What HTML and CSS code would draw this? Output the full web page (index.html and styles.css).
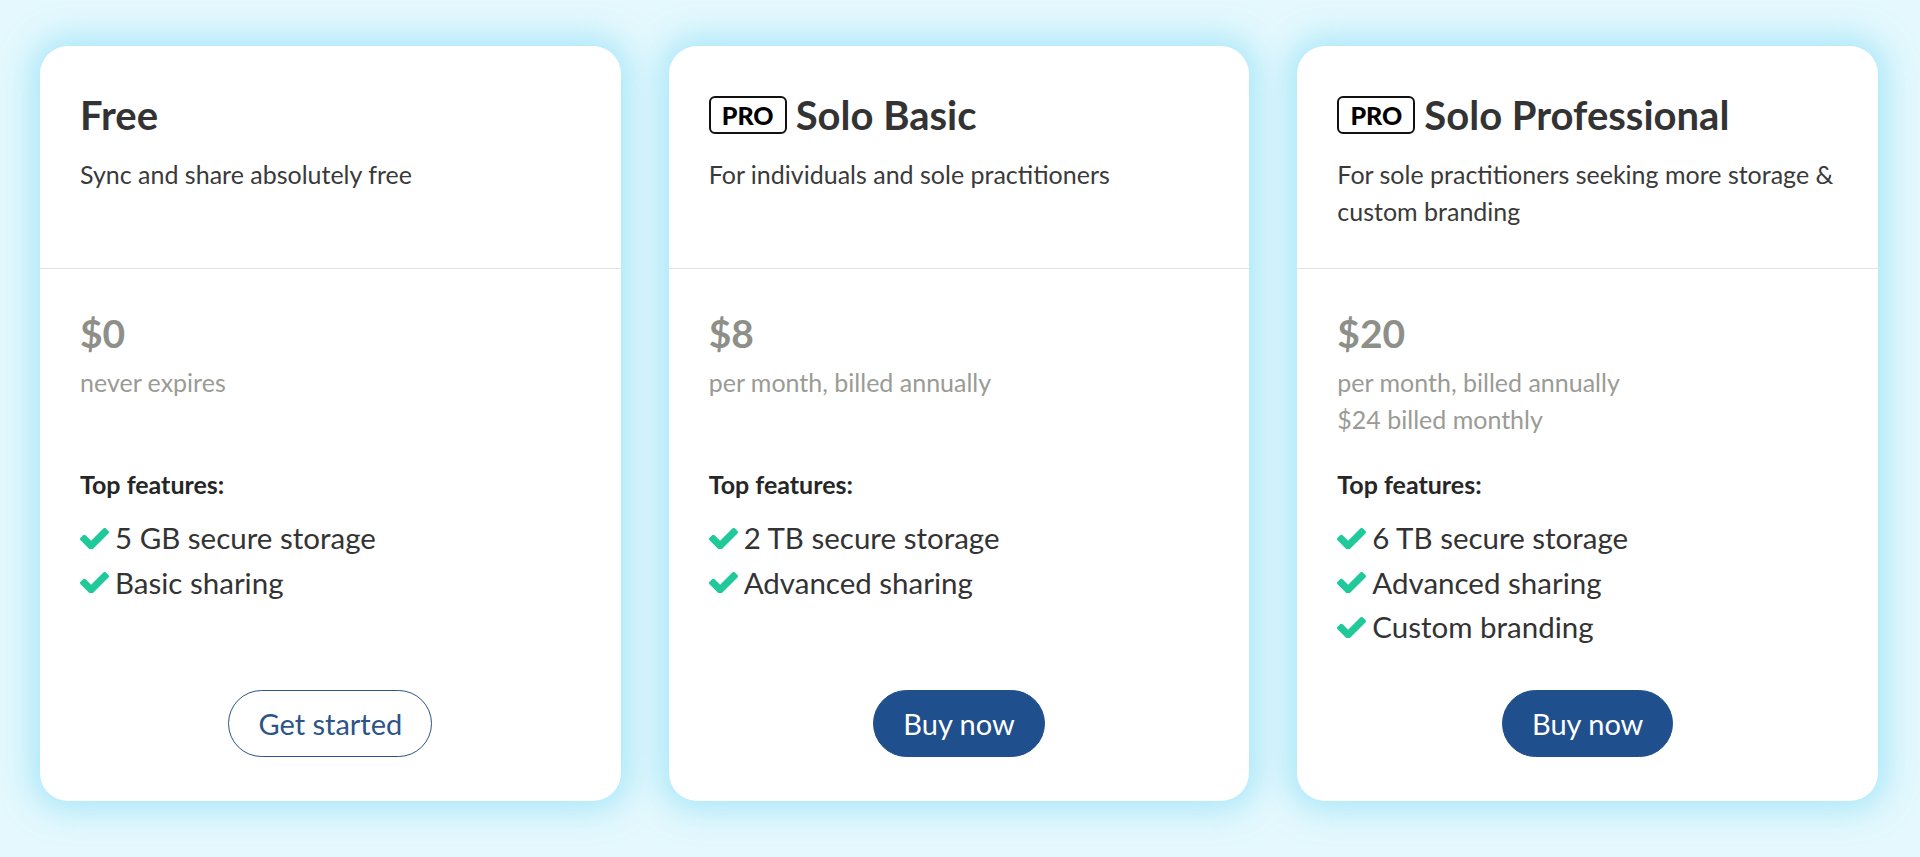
FILE: index.html
```html
<!DOCTYPE html>
<html lang="en">
<head>
<meta charset="utf-8">
<title>Plans</title>
<link rel="stylesheet" href="styles.css">
</head>
<body>
<main class="plans">
  <section class="card">
    <header class="card-head">
      <h2 class="plan-title">Free</h2>
      <p class="plan-desc">Sync and share absolutely free</p>
    </header>
    <div class="card-body">
      <div class="price-block">
        <div class="price">$0</div>
        <div class="price-note">never expires</div>
      </div>
      <h3 class="feat-title">Top features:</h3>
      <ul class="features">
        <li><svg class="check" viewBox="120 340 1552 1120"><path d="M1671 566q0 40-28 68l-724 724-136 136q-28 28-68 28t-68-28l-136-136-362-362q-28-28-28-68t28-68l136-136q28-28 68-28t68 28l294 295 656-657q28-28 68-28t68 28l136 136q28 28 28 68z"/></svg>5 GB secure storage</li>
        <li><svg class="check" viewBox="120 340 1552 1120"><path d="M1671 566q0 40-28 68l-724 724-136 136q-28 28-68 28t-68-28l-136-136-362-362q-28-28-28-68t28-68l136-136q28-28 68-28t68 28l294 295 656-657q28-28 68-28t68 28l136 136q28 28 28 68z"/></svg>Basic sharing</li>
      </ul>
      <div class="cta"><a class="btn btn-outline" href="#">Get started</a></div>
    </div>
  </section>

  <section class="card">
    <header class="card-head">
      <h2 class="plan-title"><span class="pro">PRO</span>Solo Basic</h2>
      <p class="plan-desc">For individuals and sole practitioners</p>
    </header>
    <div class="card-body">
      <div class="price-block">
        <div class="price">$8</div>
        <div class="price-note">per month, billed annually</div>
      </div>
      <h3 class="feat-title">Top features:</h3>
      <ul class="features">
        <li><svg class="check" viewBox="120 340 1552 1120"><path d="M1671 566q0 40-28 68l-724 724-136 136q-28 28-68 28t-68-28l-136-136-362-362q-28-28-28-68t28-68l136-136q28-28 68-28t68 28l294 295 656-657q28-28 68-28t68 28l136 136q28 28 28 68z"/></svg>2 TB secure storage</li>
        <li><svg class="check" viewBox="120 340 1552 1120"><path d="M1671 566q0 40-28 68l-724 724-136 136q-28 28-68 28t-68-28l-136-136-362-362q-28-28-28-68t28-68l136-136q28-28 68-28t68 28l294 295 656-657q28-28 68-28t68 28l136 136q28 28 28 68z"/></svg>Advanced sharing</li>
      </ul>
      <div class="cta"><a class="btn btn-solid" href="#">Buy now</a></div>
    </div>
  </section>

  <section class="card">
    <header class="card-head">
      <h2 class="plan-title"><span class="pro">PRO</span>Solo Professional</h2>
      <p class="plan-desc">For sole practitioners seeking more storage &amp; custom branding</p>
    </header>
    <div class="card-body">
      <div class="price-block">
        <div class="price">$20</div>
        <div class="price-note">per month, billed annually</div>
        <div class="price-note">$24 billed monthly</div>
      </div>
      <h3 class="feat-title">Top features:</h3>
      <ul class="features">
        <li><svg class="check" viewBox="120 340 1552 1120"><path d="M1671 566q0 40-28 68l-724 724-136 136q-28 28-68 28t-68-28l-136-136-362-362q-28-28-28-68t28-68l136-136q28-28 68-28t68 28l294 295 656-657q28-28 68-28t68 28l136 136q28 28 28 68z"/></svg>6 TB secure storage</li>
        <li><svg class="check" viewBox="120 340 1552 1120"><path d="M1671 566q0 40-28 68l-724 724-136 136q-28 28-68 28t-68-28l-136-136-362-362q-28-28-28-68t28-68l136-136q28-28 68-28t68 28l294 295 656-657q28-28 68-28t68 28l136 136q28 28 28 68z"/></svg>Advanced sharing</li>
        <li><svg class="check" viewBox="120 340 1552 1120"><path d="M1671 566q0 40-28 68l-724 724-136 136q-28 28-68 28t-68-28l-136-136-362-362q-28-28-28-68t28-68l136-136q28-28 68-28t68 28l294 295 656-657q28-28 68-28t68 28l136 136q28 28 28 68z"/></svg>Custom branding</li>
      </ul>
      <div class="cta"><a class="btn btn-solid" href="#">Buy now</a></div>
    </div>
  </section>
</main>
</body>
</html>
```

FILE: styles.css
```css
* { box-sizing: border-box; }

html, body {
  margin: 0;
  padding: 0;
}

body {
  background: #e4f8fd;
  font-family: Lato, "Open Sans", "Liberation Sans", sans-serif;
  color: #333;
  height: 857px;
  overflow: hidden;
}

.plans {
  display: flex;
  gap: 48px;
  padding: 46px 42px 0 40px;
}

.card {
  flex: 1 1 0;
  height: 755px;
  background: #fff;
  border-radius: 28px;
  box-shadow: 0 0 30px 9px rgba(140, 222, 248, 0.65);
  display: flex;
  flex-direction: column;
  overflow: hidden;
}

.card-head {
  height: 223px;
  padding: 45px 40px 0;
  border-bottom: 1px solid #e3e3e3;
}

.plan-title {
  margin: 0;
  font-size: 40px;
  line-height: 48px;
  font-weight: 700;
  color: #333;
  display: flex;
  align-items: center;
}

.pro {
  display: inline-flex;
  align-items: center;
  justify-content: center;
  width: 78px;
  height: 38px;
  border: 2px solid #111;
  border-radius: 6px;
  font-size: 25px;
  font-weight: 900;
  color: #000;
  margin-right: 9px;
  line-height: 1;
}

.plan-desc {
  margin: 17px 0 0;
  font-size: 25px;
  line-height: 37px;
  color: #3a3a3a;
}

.card-body {
  flex: 1;
  display: flex;
  flex-direction: column;
  padding: 41px 40px 44px;
}

.price-block {
  height: 157px;
}

.price {
  font-size: 39px;
  line-height: 46px;
  font-weight: 700;
  color: #8e8f89;
  margin-bottom: 8px;
}

.price-note {
  font-size: 25px;
  line-height: 37px;
  color: #9a9b95;
}

.feat-title {
  margin: 0;
  font-size: 25px;
  line-height: 34px;
  font-weight: 700;
  color: #262626;
}

.features {
  list-style: none;
  margin: 15px 0 0;
  padding: 0;
}

.features li {
  display: flex;
  align-items: center;
  font-size: 29.5px;
  line-height: 44.5px;
  color: #333;
}

.check {
  width: 29px;
  height: 21px;
  fill: #1fc99a;
  margin-right: 6px;
  flex: none;
}

.cta {
  margin-top: auto;
  display: flex;
  justify-content: center;
}

.btn {
  display: inline-flex;
  align-items: center;
  justify-content: center;
  height: 67px;
  padding: 0 29px;
  border-radius: 34px;
  font-size: 29px;
  text-decoration: none;
  border: 1.5px solid #2c5489;
}

.btn-outline {
  color: #2c5489;
  background: #fff;
}

.btn-solid {
  background: #1f4f8c;
  border-color: #1f4f8c;
  color: #fff;
}
```
